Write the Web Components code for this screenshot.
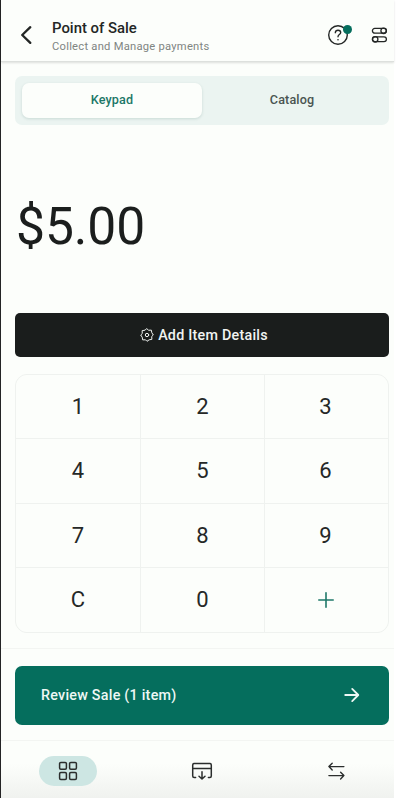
<!DOCTYPE html>
<html lang="en">
<head>
<meta charset="utf-8">
<title>Point of Sale</title>
<style>
html,body{margin:0;height:100%;background:#fff;overflow:hidden}
</style>
</head>
<body>
<pos-app></pos-app>
<script>
const define = (name, html) => customElements.define(name, class extends HTMLElement {
  constructor() {
    super();
    const t = document.createElement('template');
    t.innerHTML = html;
    this.attachShadow({ mode: 'open' }).append(t.content.cloneNode(true));
  }
});

const icons = {
  back: [12, 20, '<path d="M10.3 2.2 2.2 10l8.1 7.9" stroke-width="2.3"/>'],
  help: [24, 24, '<circle cx="12" cy="12" r="9.3" stroke-width="1.4"/><path d="M9.3 9.7c.1-1.6 1.2-2.5 2.7-2.5 1.6 0 2.7 1 2.7 2.4 0 1.9-2.7 2-2.7 4.1" stroke-width="1.35"/><circle cx="12" cy="16.8" r=".8" fill="currentColor" stroke="none"/>'],
  sliders: [18, 18, '<g stroke-width="1.3"><rect x="2.4" y="2.4" width="14" height="4.8" rx="2.4"/><circle cx="13.6" cy="4.8" r="2.7"/><rect x="2.4" y="10.9" width="14" height="4.8" rx="2.4"/><circle cx="5.2" cy="13.3" r="2.7"/></g>'],
  gear: [14, 14, '<g stroke-width="1"><path d="M7 .8 8.5 2.3l2.8-.2.5 2.6L13.3 7l-1.6 1.5.2 2.8-2.7.5L7 13.3l-1.5-1.5-2.8.1-.5-2.7L.7 7l1.6-1.5-.2-2.8 2.7-.5z"/><circle cx="7" cy="7" r="1.7"/></g>'],
  plus: [16, 16, '<path d="M8 .8v14.4M.8 8h14.4" stroke-width="1.6"/>'],
  arrow: [16, 16, '<path d="M1.2 8h13M8.2 1.9 14.3 8l-6.1 6.1" stroke-width="1.8"/>'],
  grid: [20, 20, '<g stroke-width="1.5"><rect x="1.6" y="1.4" width="6.8" height="6.8" rx="1.2"/><rect x="11.6" y="1.4" width="6.8" height="6.8" rx="1.2"/><rect x="1.6" y="11.6" width="6.8" height="6.8" rx="1.2"/><rect x="11.6" y="11.6" width="6.8" height="6.8" rx="1.2"/></g>'],
  deposit: [22, 20, '<g stroke-width="1.5"><path d="M4.6 16.4H3.2a1.5 1.5 0 0 1-1.5-1.5V4a1.5 1.5 0 0 1 1.5-1.5h15.6A1.5 1.5 0 0 1 20.3 4v10.9a1.5 1.5 0 0 1-1.5 1.5h-1.4M1.7 7.4h18.6M11 10.8v7M8 15.2l3 2.8 3-2.8"/></g>'],
  swap: [18, 20, '<g stroke-width="1.4"><path d="M16.9 5.6h-15M5.2 2.3 1.9 5.6l3.3 3.3M1.9 14.6h15M13.6 11.3l3.3 3.3-3.3 3.3"/></g>']
};

customElements.define('pos-icon', class extends HTMLElement {
  connectedCallback() {
    const [w, h, body] = icons[this.getAttribute('name')];
    this.attachShadow({ mode: 'open' }).innerHTML =
      `<style>:host{display:block;flex:none;width:${w}px;height:${h}px}svg{display:block}</style>
       <svg width="${w}" height="${h}" viewBox="0 0 ${w} ${h}" fill="none" stroke="currentColor" stroke-linecap="round" stroke-linejoin="round">${body}</svg>`;
  }
});

define('pos-header', `<style>
:host{display:flex;box-sizing:border-box;height:62px;padding:9px 6px 0 19px;align-items:center;border-bottom:1px solid #dde0dd;box-shadow:0 1px 2px #0000001f}
.text{margin-left:20px;padding-top:2px;flex:1;display:flex;flex-direction:column;gap:3px}
.title{font:500 14.9px/18px Roboto,sans-serif;color:#232625;white-space:nowrap}
.sub{font:400 11.2px/14px Roboto,sans-serif;letter-spacing:.25px;color:#7f8582;white-space:nowrap}
.help{position:relative;margin-right:20.5px}
.dot{position:absolute;right:-2px;top:2px;width:9px;height:9px;border-radius:50%;background:#056e5d}
</style><pos-icon name="back"></pos-icon>
<div class="text"><div class="title"><slot name="title"></slot></div><div class="sub"><slot name="sub"></slot></div></div>
<div class="help"><pos-icon name="help"></pos-icon><span class="dot"></span></div>
<pos-icon name="sliders"></pos-icon>`);

define('pos-tab', `<style>
:host{display:flex;align-items:center;justify-content:center;flex:1;padding-bottom:1px;border-radius:7px;font:500 12.6px/16px Roboto,sans-serif;letter-spacing:.12px;color:#4a5451}
:host([active]){background:#fcfefb;color:#1d7868;box-shadow:0 1px 3px #0b4b3e26}
</style><slot></slot>`);

define('pos-tabs', `<style>
:host{display:flex;box-sizing:border-box;height:49px;margin:14px 5px 0 14px;padding:7px;border-radius:7px;background:#ebf4f1}
</style><slot></slot>`);

define('pos-amount', `<style>
:host{display:flex;align-items:center;height:188px;padding:15px 0 0 15px;box-sizing:border-box;font:400 51.6px/60px Roboto,sans-serif;letter-spacing:-.1px;color:#1b1e1d}
</style><slot></slot>`);

define('pos-details', `<style>
:host{display:flex;align-items:center;justify-content:center;gap:4px;height:44px;margin:0 5px 0 14px;padding-left:4px;box-sizing:border-box;border-radius:5px;background:#1a1d1c;color:#f1f4f2;font:500 14.3px/18px Roboto,sans-serif;letter-spacing:.25px}
</style><pos-icon name="gear"></pos-icon><span><slot></slot></span>`);

define('pos-key', `<style>
:host{display:flex;align-items:center;justify-content:center;background:#fcfefb;font:400 22px/26px Roboto,sans-serif;color:#252827}
:host([accent]){color:#1e7869}
</style><slot></slot>`);

define('pos-keypad', `<style>
:host{display:grid;grid-template-columns:124px 123px 1fr;grid-template-rows:63px 64px 63px 1fr;gap:1px;box-sizing:border-box;height:259px;margin:17px 5px 0 14px;border:1px solid #eff2ef;background:#eff2ef;border-radius:12px;overflow:hidden}
pos-key{padding-right:1px}
::slotted(pos-key:nth-child(3n)){padding-right:2px}
</style><slot></slot>`);

define('pos-review', `<style>
:host{display:flex;box-sizing:border-box;height:92px;margin-top:15px;padding:17px 5px 15.5px 14px;border-top:1px solid #f3f5f2}
.btn{flex:1;display:flex;align-items:center;justify-content:space-between;padding:0 29px 0 26px;border-radius:7px;background:#056e5d;color:#eef8f5;font:500 14.3px/18px Roboto,sans-serif;letter-spacing:.25px}
</style><div class="btn"><span><slot></slot></span><pos-icon name="arrow"></pos-icon></div>`);

define('pos-nav', `<style>
:host{display:grid;grid-template-columns:repeat(3,134px);overflow:hidden;box-sizing:border-box;flex:1;padding-top:15px;border-top:1px solid #f3f5f2;background:linear-gradient(#fcfefb 40%,#f0f2ef);color:#2b2e2d}
div{display:flex;justify-content:center;align-items:center;height:30px}
.pill{width:58px;justify-self:center;border-radius:15px;background:#cde6e3}
</style><div class="pill"><pos-icon name="grid"></pos-icon></div><div><pos-icon name="deposit"></pos-icon></div><div><pos-icon name="swap"></pos-icon></div>`);

define('pos-app', `<style>
:host{display:flex;flex-direction:column;box-sizing:border-box;width:394px;height:798px;border-left:1px solid #242425;background:#fcfefb;color:#232625}
</style>
<pos-header><span slot="title">Point of Sale</span><span slot="sub">Collect and Manage payments</span></pos-header>
<pos-tabs><pos-tab active>Keypad</pos-tab><pos-tab>Catalog</pos-tab></pos-tabs>
<pos-amount>$5.00</pos-amount>
<pos-details>Add Item Details</pos-details>
<pos-keypad>
<pos-key>1</pos-key><pos-key>2</pos-key><pos-key>3</pos-key>
<pos-key>4</pos-key><pos-key>5</pos-key><pos-key>6</pos-key>
<pos-key>7</pos-key><pos-key>8</pos-key><pos-key>9</pos-key>
<pos-key>C</pos-key><pos-key>0</pos-key><pos-key accent><pos-icon name="plus"></pos-icon></pos-key>
</pos-keypad>
<pos-review>Review Sale (1 item)</pos-review>
<pos-nav></pos-nav>`);
</script>
</body>
</html>
